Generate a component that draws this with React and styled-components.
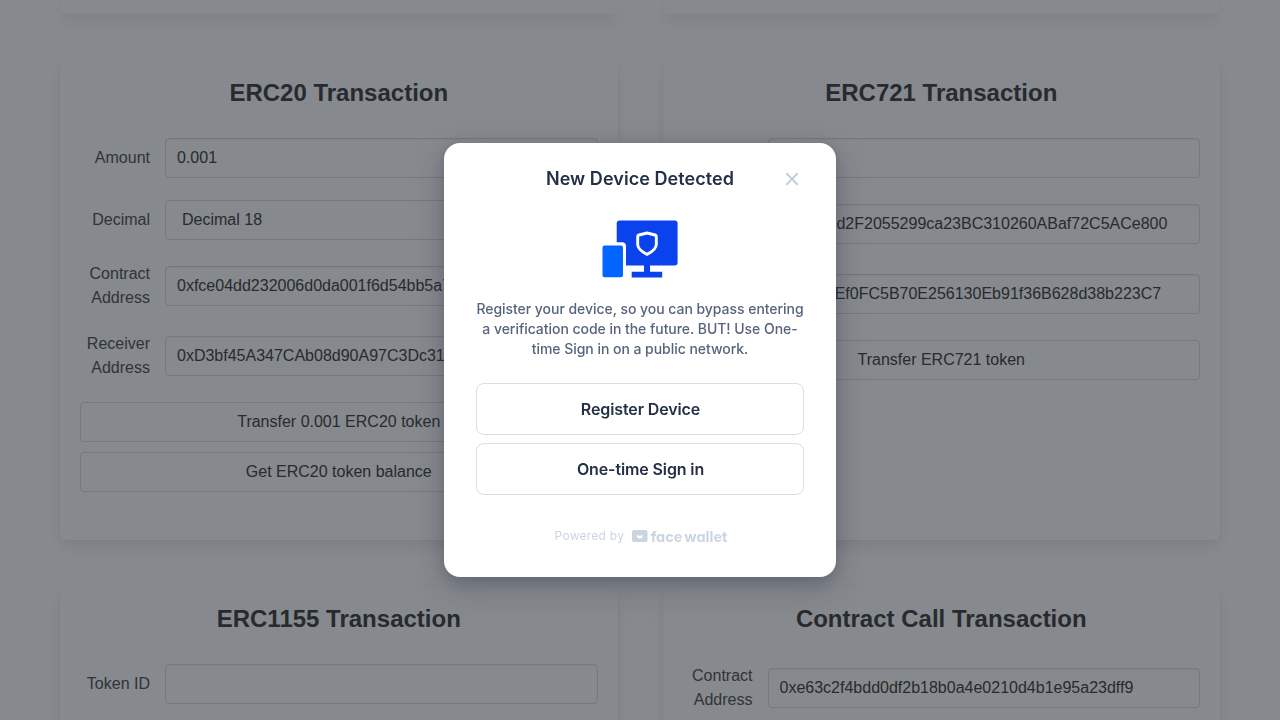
import React from "react";
import styled, { createGlobalStyle } from "styled-components";

const GlobalStyle = createGlobalStyle`
  *, *::before, *::after { box-sizing: border-box; }
  html, body { margin: 0; padding: 0; }
  body {
    height: 720px;
    overflow: hidden;
    background: #fff;
    font-family: "Liberation Sans", Arial, sans-serif;
    font-size: 16px;
    line-height: 24px;
    color: #4a4a4a;
    text-rendering: optimizeLegibility;
  }
  button, input { font: inherit; margin: 0; }
`;

const Page = styled.main`
  height: 720px;
  overflow: hidden;
  padding: 0 60px;
`;

const Columns = styled.div`
  display: grid;
  grid-template-columns: 1fr 1fr;
  grid-template-rows: 14px 480px 480px;
  column-gap: 45px;
  row-gap: 46px;
`;

const Card = styled.section`
  display: flex;
  flex-direction: column;
  padding: ${(p) => (p.$end ? "0" : "20px")};
  background: #fff;
  border-radius: ${(p) => (p.$end ? "0 0 6px 6px" : "6px")};
  box-shadow: 0 8px 16px -2px rgba(10, 10, 10, 0.1), 0 0 0 1px rgba(10, 10, 10, 0.02);
`;

const CardTitle = styled.h2`
  margin: 0 0 33px;
  font-size: 24px;
  line-height: 25px;
  font-weight: 600;
  text-align: center;
  color: #363636;
`;

const Field = styled.label`
  display: grid;
  grid-template-columns: 70px 1fr;
  column-gap: 15px;
  align-items: center;
  margin-bottom: 22px;
  text-align: right;
`;

const Input = styled.input`
  width: 100%;
  height: 40px;
  padding: 0 11px;
  border: 1px solid #dbdbdb;
  border-radius: 4px;
  background: #fff;
  color: #363636;
  box-shadow: inset 0 1px 2px rgba(10, 10, 10, 0.05);
  outline: none;
`;

const Select = styled.div`
  height: 40px;
  padding: 7px 16px;
  border: 1px solid #dbdbdb;
  border-radius: 4px;
  color: #363636;
  text-align: left;
`;

const Action = styled.button`
  height: 40px;
  margin-bottom: 10px;
  padding: 0 16px;
  border: 1px solid #dbdbdb;
  border-radius: 4px;
  background: #fff;
  color: #363636;
`;

const Overlay = styled.div`
  position: fixed;
  inset: 0;
  display: flex;
  align-items: center;
  justify-content: center;
  background: rgba(26, 33, 40, 0.53);
`;

const Dialog = styled.div`
  display: flex;
  flex-direction: column;
  align-items: center;
  width: 392px;
  height: 434px;
  padding: 20px 32px;
  border-radius: 16px;
  background: #fff;
  box-shadow: 0 10px 32px rgba(30, 41, 59, 0.25), 0 4px 12px rgba(50, 60, 85, 0.25);
  font-family: Inter, sans-serif;
`;

const DialogHeader = styled.header`
  display: grid;
  grid-template-columns: 24px 1fr 24px;
  align-items: center;
  width: 100%;
  height: 32px;
`;

const DialogTitle = styled.h1`
  grid-column: 2;
  margin: 0;
  font-size: 18px;
  line-height: 28px;
  font-weight: 600;
  letter-spacing: 0.06px;
  text-align: center;
  white-space: nowrap;
  color: #243045;
`;

const CloseButton = styled.button`
  display: flex;
  width: 24px;
  height: 24px;
  padding: 0;
  border: 0;
  background: none;
`;

const Artwork = styled.svg`
  display: block;
  margin: 14px 0 10px;
  width: 80px;
  height: 80px;
`;

const Message = styled.p`
  margin: 0 0 24px;
  font-size: 14px;
  line-height: 20px;
  font-weight: 450;
  letter-spacing: -0.04px;
  text-align: center;
  color: #56647c;
`;

const Choice = styled.button`
  width: 100%;
  height: 52px;
  flex: none;
  margin-bottom: 8px;
  padding: 0 0 0 1px;
  border: 1px solid #d9dee7;
  border-radius: 8px;
  background: #fff;
  font-size: 16px;
  font-weight: 600;
  letter-spacing: -0.12px;
  color: #243045;
`;

const Footer = styled.footer`
  display: flex;
  align-items: center;
  height: 20px;
  margin-top: 23px;
  padding-left: 2px;
  font-size: 12px;
  letter-spacing: 0.25px;
  color: #cbd5e1;
`;

const Brand = styled.span`
  display: flex;
  align-items: center;
  margin-left: 8px;
`;

const Wordmark = styled.span`
  margin: 1px 0 0 2.5px;
  font-size: 14.5px;
  line-height: 20px;
  font-weight: 700;
  letter-spacing: 0;
  word-spacing: -1.5px;
  font-feature-settings: "cv11";
  white-space: nowrap;
`;

const TextField = ({ label, value = "" }) => (
  <Field>
    <span>{label}</span>
    <Input readOnly value={value} />
  </Field>
);

const DeviceArt = () => (
  <Artwork viewBox="0 0 80 80" fill="none">
    <rect x="16.7" y="11.5" width="60.9" height="45" rx="3" fill="#0a43ee" />
    <path d="M44 56h6v6.7h12.2v5.8H31.7v-5.8H44z" fill="#0a43ee" />
    <path d="M0 33.2h22a4 4 0 0 1 4 4V72H0z" fill="#fff" />
    <rect x="2.5" y="36.5" width="20.5" height="31.8" rx="2" fill="#06f" />
    <path
      d="M47 24l8.1 2q1.2.4 1.2 1.6v7.8c0 4.3-4.1 7.2-9.3 10-5.2-2.800-9.300-5.700-9.300-10v-7.800q0-1.200 1.200-1.600z"
      stroke="#fff"
      strokeWidth="2.9"
      strokeLinejoin="round"
    />
  </Artwork>
);

export default function App() {
  return (
    <>
      <GlobalStyle />
      <Page>
        <Columns>
          <Card $end />
          <Card $end />
          <Card>
            <CardTitle>ERC20 Transaction</CardTitle>
            <TextField label="Amount" value="0.001" />
            <Field as="div">
              <span>Decimal</span>
              <Select>Decimal 18</Select>
            </Field>
            <TextField label="Contract Address" value="0xfce04dd232006d0da001f6d54bb5a7" />
            <TextField label="Receiver Address" value="0xD3bf45A347CAb08d90A97C3Dc31" />
            <Action>Transfer 0.001 ERC20 token</Action>
            <Action>Get ERC20 token balance</Action>
          </Card>
          <Card>
            <CardTitle>ERC721 Transaction</CardTitle>
            <TextField label="Token ID" />
            <TextField label="Contract Address" value="0xCbB9d2F2055299ca23BC310260ABaf72C5ACe800" />
            <TextField label="Receiver Address" value="0xA7F9Ef0FC5B70E256130Eb91f36B628d38b223C7" />
            <Action>Transfer ERC721 token</Action>
          </Card>
          <Card>
            <CardTitle>ERC1155 Transaction</CardTitle>
            <TextField label="Token ID" />
          </Card>
          <Card>
            <CardTitle>Contract Call Transaction</CardTitle>
            <TextField label="Contract Address" value="0xe63c2f4bdd0df2b18b0a4e0210d4b1e95a23dff9" />
          </Card>
        </Columns>
      </Page>
      <Overlay>
        <Dialog role="dialog">
          <DialogHeader>
            <DialogTitle>New Device Detected</DialogTitle>
            <CloseButton aria-label="Close">
              <svg width="24" height="24" viewBox="0 0 24 24" fill="none">
                <path d="M6.8 6.8l10.4 10.4M17.2 6.8l-10.4 10.4" stroke="#c3cedb" strokeWidth="2" strokeLinecap="round" />
              </svg>
            </CloseButton>
          </DialogHeader>
          <DeviceArt />
          <Message>
            Register your device, so you can bypass entering a verification code in the future. BUT! Use One-time Sign
            in on a public network.
          </Message>
          <Choice>Register Device</Choice>
          <Choice>One-time Sign in</Choice>
          <Footer>
            <span>Powered by</span>
            <Brand>
              <svg width="16" height="12" viewBox="0 0 16 12">
                <rect width="15.5" height="12" rx="1.8" fill="#cbd5e1" />
                <path d="M4.7 5.2q1.7-.3 3.1.8 1.4-1.1 3.1-.8-.5 3.2-3.1 3.2T4.7 5.2z" fill="#fff" />
              </svg>
              <Wordmark>face wallet</Wordmark>
            </Brand>
          </Footer>
        </Dialog>
      </Overlay>
    </>
  );
}
